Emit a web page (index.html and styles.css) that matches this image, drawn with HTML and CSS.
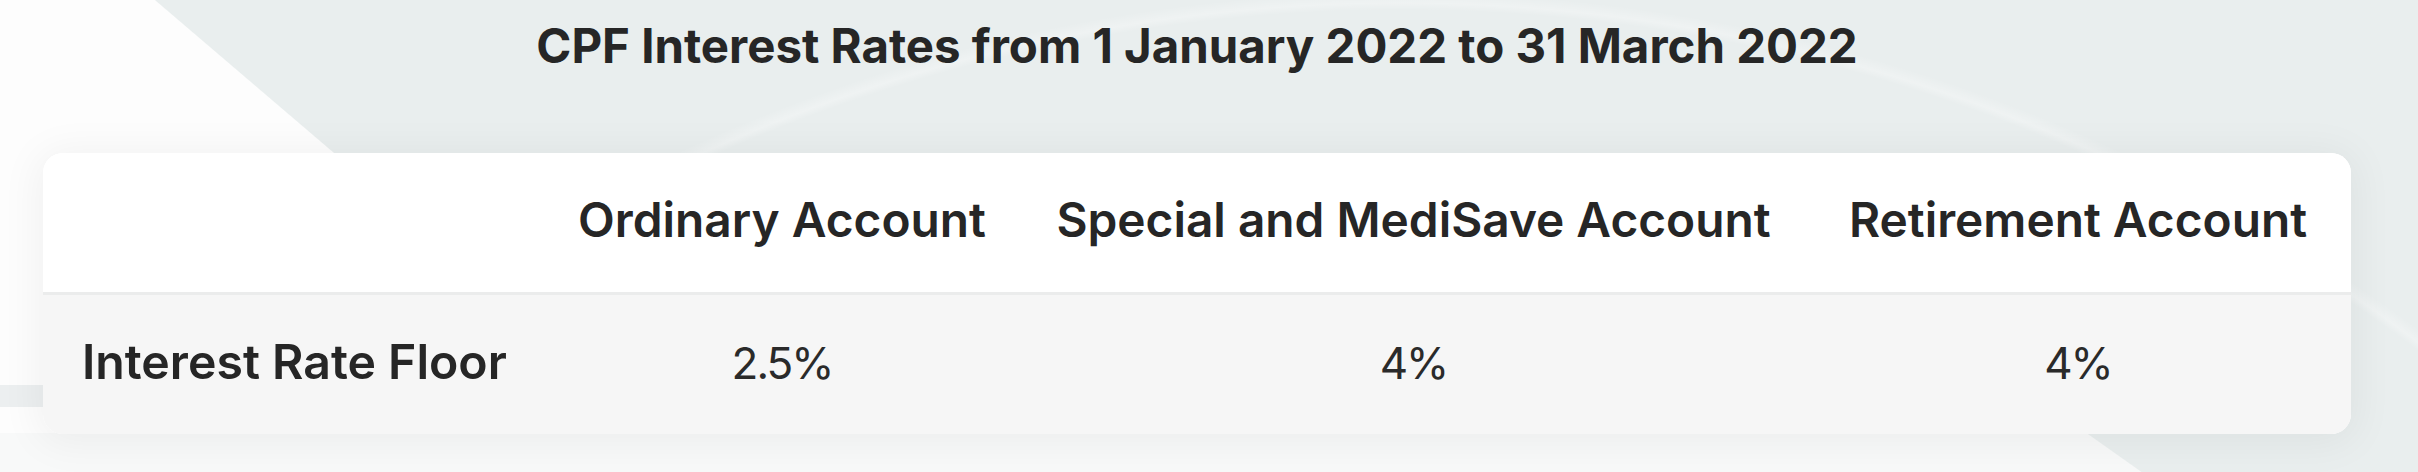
FILE: index.html
```html
<!DOCTYPE html>
<html lang="en">
<head>
<meta charset="utf-8">
<title>CPF Interest Rates</title>
<link rel="stylesheet" href="styles.css">
</head>
<body>
<div class="scene">
  <main class="page">
    <h1 class="title">CPF Interest Rates from 1 January 2022 to 31 March 2022</h1>
    <div class="card">
      <table class="rates">
        <colgroup>
          <col class="col-label">
          <col class="col-oa">
          <col class="col-sma">
          <col class="col-ra">
        </colgroup>
        <thead>
          <tr>
            <th class="head-cell"></th>
            <th class="head-cell">Ordinary Account</th>
            <th class="head-cell">Special and MediSave Account</th>
            <th class="head-cell">Retirement Account</th>
          </tr>
        </thead>
        <tbody>
          <tr>
            <th class="row-label" scope="row">Interest Rate Floor</th>
            <td class="value">2.5%</td>
            <td class="value">4%</td>
            <td class="value">4%</td>
          </tr>
        </tbody>
      </table>
    </div>
  </main>
</div>
</body>
</html>
```

FILE: styles.css
```css
html, body {
  margin: 0;
  padding: 0;
}

body {
  font-family: "Inter", "Noto Sans", sans-serif;
  color: #262626;
  background: #e9eeee;
}

.scene {
  min-height: 100vh;
  overflow: hidden;
  background:
    linear-gradient(to bottom, transparent 385px, #eceff0 385px, #eceff0 407px, transparent 407px) no-repeat 0 0 / 43px 100%,
    linear-gradient(35.3deg, #f8f9f9 1237px, transparent 1238px) no-repeat 0 100% / 100% 39px,
    radial-gradient(circle at 1400px 1700px, transparent 1690px, rgba(255, 255, 255, 0.28) 1697px, transparent 1708px),
    linear-gradient(40.5deg, #fdfdfd 459px, transparent 460px),
    #e9eeee;
}

.page {
  width: 2308px;
  margin-left: 43px;
  padding-top: 17px;
}

.title {
  margin: 0;
  font-size: 47.4px;
  line-height: 58px;
  font-weight: 700;
  text-align: center;
  color: #262626;
}

.card {
  margin-top: 78px;
  background: #ffffff;
  border-radius: 20px;
  overflow: hidden;
  box-shadow: 0 4px 40px 6px rgba(0, 0, 0, 0.05);
}

.rates {
  width: 100%;
  border-collapse: collapse;
  table-layout: fixed;
}

.col-label { width: 499px; }
.col-oa { width: 480px; }
.col-sma { width: 783px; }
.col-ra { width: 546px; }

.head-cell {
  padding: 38px 0 43px;
  font-size: 47.8px;
  line-height: 58px;
  font-weight: 600;
  text-align: center;
  white-space: nowrap;
  color: #262626;
  border-bottom: 3px solid #ebecec;
  background: #ffffff;
}

.rates tbody tr {
  background: #f6f6f6;
}

.row-label {
  padding: 38px 0 42px 39px;
  font-size: 48.2px;
  line-height: 58px;
  font-weight: 600;
  text-align: left;
  white-space: nowrap;
  vertical-align: baseline;
  color: #262626;
}

.value {
  padding: 38px 0 42px;
  font-size: 44px;
  line-height: 58px;
  font-weight: 400;
  letter-spacing: -2px;
  text-align: center;
  vertical-align: baseline;
  color: #2a2a2a;
}
```
